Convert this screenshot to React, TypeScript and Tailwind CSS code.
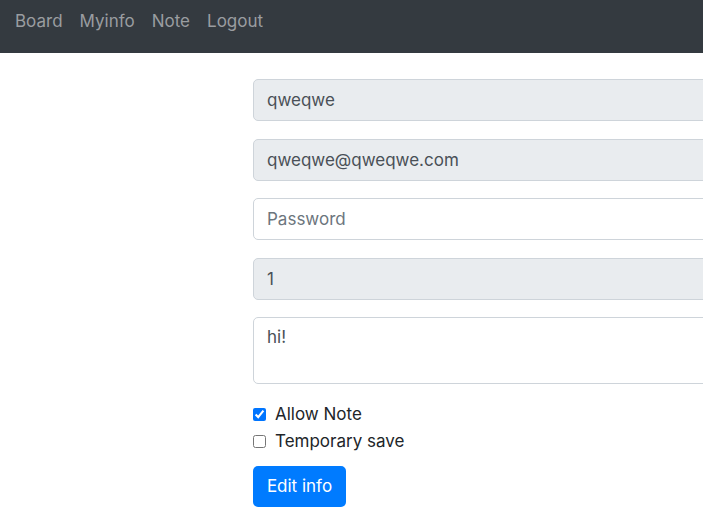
import React from 'react';

const font = { fontFamily: 'Inter, "Noto Sans", sans-serif' };

export default function App() {
  return (
    <div className="w-[703px] h-[512px] overflow-hidden bg-white text-[#212529]" style={font}>
      <nav className="h-[53px] bg-[#343a40] flex items-center pb-[9px] px-[15px] gap-[17px] text-[17px] text-[#9a9da0]">
        <a>Board</a>
        <a>Myinfo</a>
        <a>Note</a>
        <a>Logout</a>
      </nav>
      <form className="pl-[253px] pt-[26px] flex flex-col w-[1000px]">
        <input readOnly value="qweqwe" className="h-[42px] rounded-[5px] border border-[#ced4da] bg-[#e9ecef] px-[13px] text-[17px] text-[#495057] outline-none mb-[17.5px]" />
        <input readOnly value="qweqwe@qweqwe.com" className="h-[42px] rounded-[5px] border border-[#ced4da] bg-[#e9ecef] px-[13px] text-[17px] text-[#495057] outline-none mb-[17.5px]" />
        <input placeholder="Password" type="password" className="h-[42px] rounded-[5px] border border-[#ced4da] bg-white px-[13px] text-[17px] text-[#495057] placeholder:text-[#6c757d] outline-none mb-[17.5px]" />
        <input readOnly value="1" className="h-[42px] rounded-[5px] border border-[#ced4da] bg-[#e9ecef] px-[13px] text-[17px] text-[#495057] outline-none mb-[17.5px]" />
        <textarea readOnly value="hi!" className="h-[67px] rounded-[5px] border border-[#ced4da] bg-white px-[13px] pt-[7px] text-[17px] text-[#495057] outline-none resize-none mb-[17px]" />
        <label className="flex items-center h-[27px] text-[17px]">
          <input type="checkbox" defaultChecked className="w-[13px] h-[13px] mr-[9px] accent-[#0075ff]" />
          Allow Note
        </label>
        <label className="flex items-center h-[27px] text-[17px]">
          <input type="checkbox" className="w-[13px] h-[13px] mr-[9px]" />
          Temporary save
        </label>
        <div className="mt-[11px]">
          <button type="button" className="h-[41px] w-[93px] rounded-[5px] bg-[#007bff] text-white text-[17px]">
            Edit info
          </button>
        </div>
      </form>
    </div>
  );
}
